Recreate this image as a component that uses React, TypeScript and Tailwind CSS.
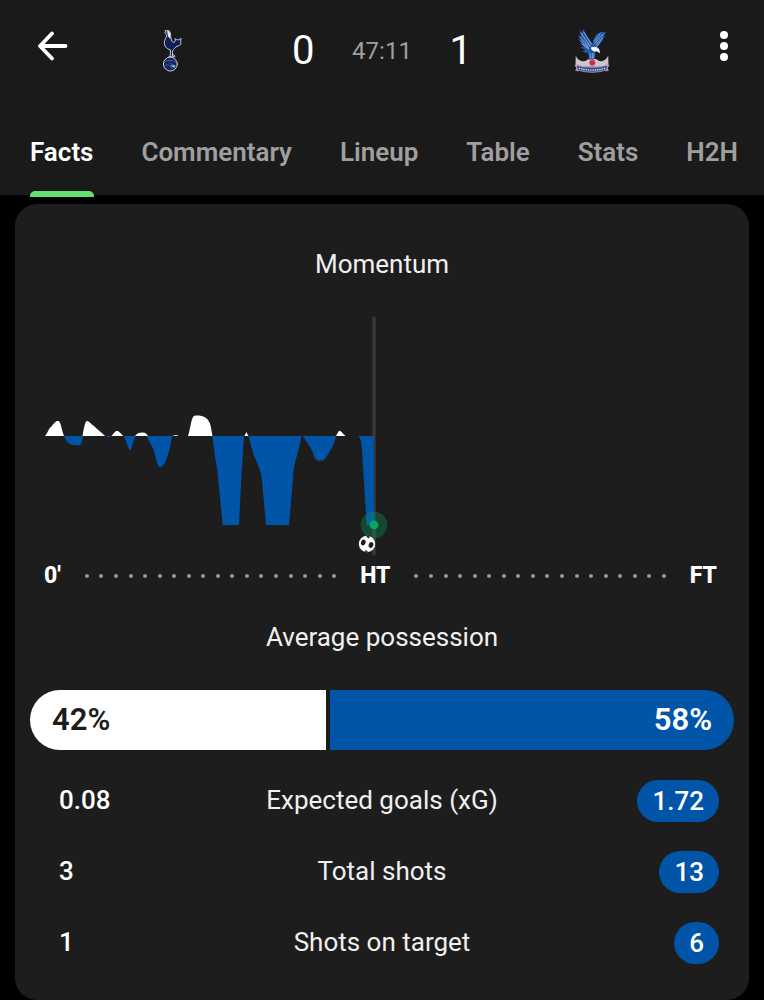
import { useState } from 'react'
import type { ReactNode } from 'react'

const tabs = ['Facts', 'Commentary', 'Lineup', 'Table', 'Stats', 'H2H']

const stats = [
  { label: 'Expected goals (xG)', home: '0.08', away: '1.72' },
  { label: 'Total shots', home: '3', away: '13' },
  { label: 'Shots on target', home: '1', away: '6' },
]

const possession = { home: 42, away: 58 }

const HomeCrest = () => (
  <svg viewBox="66 38 60 130" className="h-[43px] w-5" role="img" aria-label="Tottenham Hotspur">
    <g stroke="#c3cbdd" strokeWidth="3" strokeLinejoin="round" strokeLinecap="round">
      <path
        d="M76 44 C82 40 90 42 91 50 L93 66 C94 74 98 80 103 78 C107 76 106 71 105 67 C112 73 118 71 124 66 C121 73 124 79 121 86 C118 90 112 89 108 92 C103 98 98 101 97 108 L98 120 L86 122 L91 118 L91 101 C80 98 72 90 73 77 C73 70 78 65 80 59 C80 54 77 52 74 50 C77 50 79 48 76 44 Z"
        fill="#101e52"
      />
      <path d="M97 113 L105 120 M98 120 L104 122" fill="none" />
      <circle cx="91" cy="144" r="21" fill="#14265c" />
    </g>
    <path d="M81 45 C88 42 90 48 90 53 L91 69 L84 60 Z" fill="#e8eaf0" />
    <path
      d="M74 138 C84 131 99 132 109 139 M73 150 C84 142 91 148 95 159 M88 141 L107 151"
      fill="none"
      stroke="#5f78ad"
      strokeWidth="2"
    />
    <path d="M91 148 L106 147 L103 156 Z" fill="#a9b8d4" />
  </svg>
)

const AwayCrest = () => (
  <svg viewBox="42 36 108 136" className="h-[45px] w-9" role="img" aria-label="Crystal Palace">
    <path
      d="M47 118 C50 130 61 138 76 136 L86 130 L108 130 L118 136 C131 138 141 130 145 118 L146 153 L46 153 Z"
      fill="#cdc5ce"
    />
    <path
      d="M58 38 L64 50 L70 39 L76 52 C83 65 91 75 98 83 C100 73 103 63 110 55 L122 48 L139 49 L132 58 L136 59 L129 68 L130 72 L121 80 C118 88 115 92 112 95 C118 98 121 104 120 114 L111 107 L105 111 L103 132 L86 132 L86 114 L66 106 L76 102 L60 95 L73 92 L56 82 L68 82 L53 70 L65 71 L52 58 L63 61 Z"
      fill="#2358a8"
    />
    <g fill="none" stroke="#c3d4ec" strokeWidth="2">
      <path d="M61 50 L91 91 M71 48 L95 86 M58 63 L87 92 M61 75 L86 96 M67 86 L87 100" />
      <path d="M131 53 L104 83 M121 53 L102 77 M130 64 L108 87 M124 76 L110 91" />
    </g>
    <path d="M92 96 C101 89 115 93 118 102 L120 112 L111 106 L103 107 L96 103 Z" fill="#f3f5fa" />
    <path d="M89 112 L92 128 M97 112 L97 128 M102 112 L101 128" stroke="#b6c9e5" strokeWidth="2" />
    <circle cx="97" cy="141" r="9" fill="#c92842" stroke="#d98a9b" strokeWidth="2" />
    <path d="M43 148 L56 146 L55 167 L45 166 L49 157 Z M149 148 L136 146 L137 167 L147 166 L143 157 Z" fill="#c77f94" />
    <path d="M48 148 Q97 162 144 148 L140 163 Q97 177 52 163 Z" fill="#384d94" stroke="#c8bdd2" strokeWidth="2" />
    <path d="M56 157 Q97 170 137 157" fill="none" stroke="#e6e6f2" strokeWidth="4" strokeDasharray="4 3" />
  </svg>
)

const Header = () => (
  <div className="flex h-[92px] items-center">
    <div className="flex w-20 justify-end pr-3">
      <button type="button" aria-label="Back">
        <svg viewBox="0 0 30 30" className="size-[30px]" fill="none" stroke="#fff" strokeWidth="3.8" strokeLinecap="round" strokeLinejoin="round">
          <path d="M27.5 15 H2.5 M14 2.5 L2 15 L14 27.5" />
        </svg>
      </button>
    </div>
    <div className="flex flex-1 justify-center pt-2">
      <HomeCrest />
    </div>
    <div className="grid w-[236px] grid-cols-3 items-center pt-[10px] text-center">
      <span className="text-[40px] leading-12">0</span>
      <span className="text-[24px] leading-12 text-[#9f9f9f]">47:11</span>
      <span className="text-[40px] leading-12">1</span>
    </div>
    <div className="flex flex-1 justify-center pt-2">
      <AwayCrest />
    </div>
    <div className="flex w-20 justify-center">
      <button type="button" aria-label="More options">
        <svg viewBox="0 0 10 32" className="h-8 w-[10px]" fill="#fff">
          <circle cx="5" cy="5" r="4" />
          <circle cx="5" cy="16" r="4" />
          <circle cx="5" cy="27" r="4" />
        </svg>
      </button>
    </div>
  </div>
)

const MomentumChart = () => (
  <svg viewBox="0 0 704 276" className="block w-full" role="img" aria-label="Momentum chart">
    <path d="M344 38 V274" stroke="#393939" strokeWidth="3.5" strokeLinecap="round" />
    <g fill="#fff">
      <path d="M15 156 C18 153 18 149 21 147 C25 142 26 141 28 141 C31 141 31 148 34 156 Z" />
      <path d="M52.5 156 C54 148 55 141 57 141 C59 141 61 144 64 146 C68 150 71 152 75 156 Z" />
      <path d="M81.5 156 C84 153 85 151 87 151 C89 151 90 153 93.5 156 Z" />
      <path d="M105 156 C107 153 109 152.5 112 152.5 C115 152.5 116 153 118 156 Z" />
      <path d="M142 156 L146 155 L149 156 Z" />
      <path d="M158 156 C161 147 161 138 164 136 C165 135.3 172 135 176 138 C181 142 181 148 182.5 156 Z" />
      <path d="M214.5 156 L216.3 152 L218.5 156 Z" />
      <path d="M306 156 L308.5 151.5 Q309.7 150 311 151.5 L315.5 156 Z" />
    </g>
    <g fill="#0055a8">
      <path d="M34 156 C36 161 39 165 44 165 C51 166 51 166 53 156 Z" />
      <path d="M75.5 156 Q78.5 158.5 81.5 156 Z" />
      <path d="M93.5 156 C97 161 98 170 100 170 C102 170 102 162 106 156 Z" />
      <path d="M116.5 156 C119 162 122 165 124 171 C127 181 127 187 130.5 187 C133 187 137 180 138 174 C141 167 140 163 142.5 156 Z" />
      <path d="M182.5 156 L185 177 L187.5 191 L192.7 245 L209 245 L211.5 194 L214 156 Z" />
      <path d="M218.5 156 C221 166 223 174 226 180 C229 188 231 191 232 200 L236 245 L259 245 L263 198 C264 181 267 179 271.5 156 Z" />
      <path d="M273 156 C277 163 281 167 283 173 C285 180 287 180.8 290 180.8 C294 180.8 295 179 297 176 C302 167 303 168 306 156 Z" />
      <path d="M328 156 C331 158 331 161 332 170 L336.7 245 L344 245 L344 156 Z" />
    </g>
    <circle cx="344" cy="245" r="13.3" fill="#07a862" fillOpacity="0.3" />
    <circle cx="344" cy="245" r="4.4" fill="#07a862" />
    <circle cx="337" cy="264" r="8.2" fill="#fff" />
    <g fill="#1d1d1d">
      <ellipse cx="333.3" cy="262.5" rx="2.3" ry="2.9" transform="rotate(20 333.3 262.5)" />
      <ellipse cx="341" cy="265" rx="2.3" ry="2.9" transform="rotate(20 341 265)" />
      <path d="M336 255.8 L340.5 256.6 L338.3 258.5 Z M334 271.5 L338.5 272 L336 270 Z" />
    </g>
  </svg>
)

const Dots = () => (
  <div className="flex flex-1 justify-between">
    {Array.from({ length: 18 }, (_, i) => (
      <span key={i} className="size-1 rounded-full bg-[#999999]" />
    ))}
  </div>
)

const SectionTitle = ({ children }: { children: ReactNode }) => (
  <h2 className="text-center text-[26px] leading-8 text-[#f0f0f0]">{children}</h2>
)

const App = () => {
  const [active, setActive] = useState('Facts')

  return (
    <div className="min-h-screen bg-black font-[Roboto,sans-serif] text-white">
      <header className="bg-[#1a1a1a]">
        <Header />
        <div role="tablist" className="mt-[18px] flex h-[85px] justify-between pr-[26px] pl-[30px]">
          {tabs.map((tab) => (
            <button
              key={tab}
              type="button"
              role="tab"
              aria-selected={tab === active}
              onClick={() => setActive(tab)}
              className={`relative text-[26px] font-semibold ${tab === active ? 'text-white' : 'text-[#9f9f9f]'}`}
            >
              {tab}
              {tab === active && (
                <span className="absolute inset-x-0 -bottom-[2px] h-[6px] rounded-t-[5px] bg-[#64e072]" />
              )}
            </button>
          ))}
        </div>
      </header>
      <main className="mx-[15px] mt-[9px] rounded-[22px] bg-[#1d1d1d] px-[15px] pt-11 pb-[22px]">
        <SectionTitle>Momentum</SectionTitle>
        <MomentumChart />
        <div className="flex h-10 items-center gap-6 pr-[17px] pl-[14px] text-[23px] font-extrabold">
          <span>0'</span>
          <Dots />
          <span>HT</span>
          <Dots />
          <span>FT</span>
        </div>
        <div className="mt-[25px]">
          <SectionTitle>Average possession</SectionTitle>
        </div>
        <div className="mt-[37px] flex h-[60px] items-center gap-1 overflow-hidden rounded-full text-[31px] font-semibold">
          <div className="flex h-full items-center bg-white pl-[22px] text-[#1d1d1d]" style={{ width: `${possession.home}%` }}>
            {possession.home}%
          </div>
          <div className="flex h-full flex-1 items-center justify-end bg-[#0055a8] pr-[22px]">{possession.away}%</div>
        </div>
        <table className="mt-[15px] w-full table-fixed text-[26px]">
          <tbody>
            {stats.map(({ label, home, away }) => (
              <tr key={label} className="h-[71px]">
                <td className="w-1/4 pl-[29px] font-medium">{home}</td>
                <th scope="row" className="text-center font-normal text-[#f0f0f0]">{label}</th>
                <td className="w-1/4 pr-[15px] text-right font-medium">
                  <span className="inline-block h-[42px] rounded-full bg-[#0055a8] px-[15px] align-middle leading-[42px]">{away}</span>
                </td>
              </tr>
            ))}
          </tbody>
        </table>
      </main>
    </div>
  )
}

export default App
